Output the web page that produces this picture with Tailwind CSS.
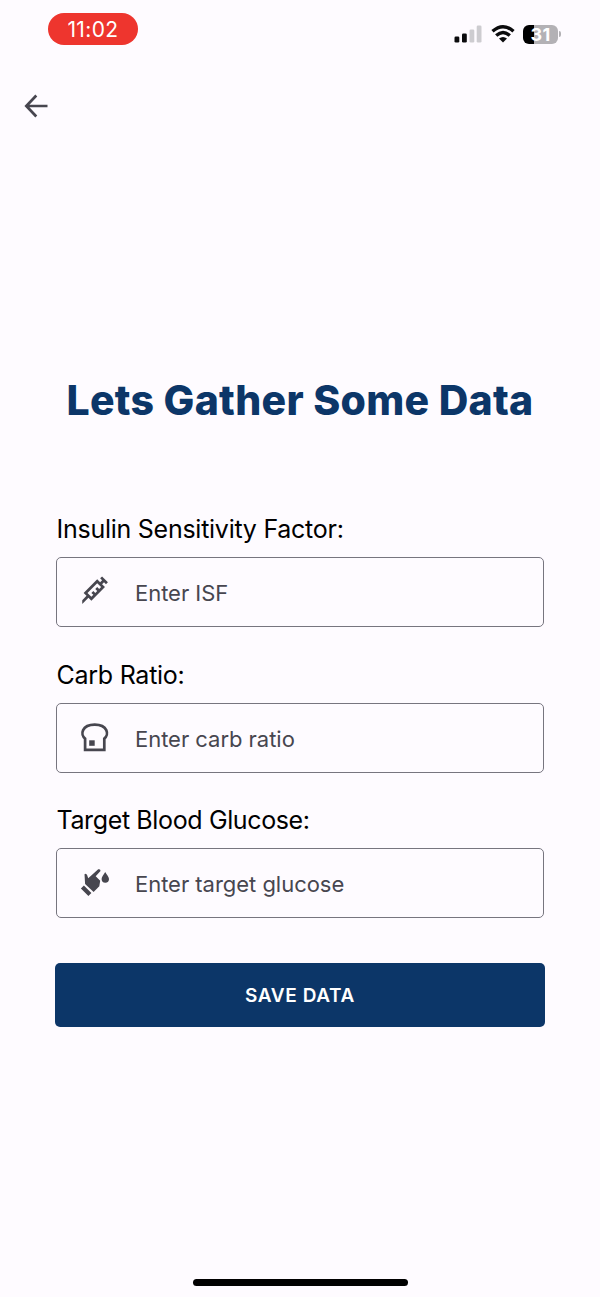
<!DOCTYPE html>
<html lang="en">
<head>
<meta charset="utf-8">
<title>Lets Gather Some Data</title>
<script src="https://cdn.jsdelivr.net/npm/@tailwindcss/browser@4"></script>
</head>
<body class="bg-[#fefbff]">
<div class="w-[600px] h-[1297px] flex flex-col overflow-hidden bg-[#fefbff] font-['Inter',sans-serif]">
  <header class="flex h-[60px] shrink-0 items-start justify-between pl-12 pr-[39px] pt-[13px]">
    <div class="flex h-8 w-[90px] items-center justify-center rounded-full bg-[#ee352e] pt-px text-[21px] tracking-[0.4px] text-white">11:02</div>
    <div class="flex h-5 items-center mt-[11px]">
      <svg class="h-5 w-[28px]" viewBox="0 0 28 20"><g fill="#0b0b0d"><rect x="0.5" y="12.5" width="4.8" height="6" rx="1.3"/><rect x="8" y="9.5" width="4.8" height="9" rx="1.3"/></g><g fill="#cdccd0"><rect x="15.5" y="5.5" width="4.8" height="13" rx="1.3"/><rect x="22.7" y="1.5" width="4.8" height="17" rx="1.3"/></g></svg>
      <svg class="ml-[9px] h-5 w-6" viewBox="0 0 24 20" fill="none" stroke="#0b0b0d" stroke-width="3.4"><path d="M1.5 7.3Q12-2 22.5 7.3M5.2 11.6Q12 5.5 18.8 11.6"/><path d="M8 14.5Q12 11.4 16 14.5L12 18.5Z" fill="#0b0b0d" stroke="none"/></svg>
      <div class="ml-[8px] flex h-[19px] w-[35px] items-center justify-center rounded-[6px] bg-gradient-to-r from-black from-31% to-[#b3b1b5] to-31% text-[18px] leading-[19px] font-bold tracking-[0.2px] text-white">31</div>
      <div class="ml-px h-[6px] w-[2px] rounded-r-full bg-[#b3b1b5]"></div>
    </div>
  </header>
  <nav class="flex h-[92px] shrink-0 items-center pl-[24px]">
    <svg class="h-6 w-6" viewBox="0 0 24 24" fill="none" stroke="#47464f" stroke-width="2.7"><path d="M12.3 1.5L2.3 12L12.3 22.5M2.5 12H23.5"/></svg>
  </nav>
  <main class="flex flex-col px-[55px] pt-[219px]">
    <h1 class="flex h-[60px] items-center justify-center whitespace-nowrap text-[41px] font-extrabold tracking-[0.28px] text-[#0c3668]">Lets Gather Some Data</h1>
    <form class="mt-[81px] flex flex-col px-[1px]">
      <label class="flex h-[36px] items-center whitespace-nowrap pl-[0.5px] text-[25px] tracking-[-0.26px] text-black">Insulin Sensitivity Factor:</label>
      <div class="mt-[9px] flex h-[70px] items-center rounded-[5px] border-[1.5px] border-[#77757f] pl-[21px]">
        <svg class="-mt-[3px] h-[33px] w-[33px]" viewBox="0 0 24 24" fill="#47464f"><path d="M11.15 15.18L9.73 13.77L11.15 12.35L12.56 13.77L13.97 12.35L12.56 10.94L13.97 9.53L15.39 10.94L16.8 9.53L13.97 6.7L6.9 13.77L9.73 16.6L11.15 15.18M3.08 19L6.2 15.89L4.08 13.77L13.97 3.87L16.1 6L17.5 4.58L16.1 3.16L17.5 1.75L21.75 6L20.34 7.4L18.92 6L17.5 7.4L19.63 9.53L9.73 19.42L7.61 17.3L3.08 21.84V19Z"/></svg>
        <span class="ml-[24px] mt-[3px] text-[22px] tracking-[-0.03px] text-[#47464f]">Enter ISF</span>
      </div>
      <label class="mt-[31px] flex h-[36px] items-center whitespace-nowrap pl-[0.5px] text-[25px] tracking-[-0.26px] text-black">Carb Ratio:</label>
      <div class="mt-[8.5px] flex h-[70px] items-center rounded-[5px] border-[1.5px] border-[#77757f] pl-[21px]">
        <svg class="-mt-px h-[33px] w-[33px]" viewBox="0 0 33 33" fill="none" stroke="#47464f" stroke-width="2.7"><path d="M7.1 28.9V17.6C2 13.8 3.7 3.6 16.7 3.6S31.4 13.8 26.3 17.6V28.9Z"/><path d="M11.2 19.3h5.5v5.5h-5.5Z" fill="#47464f" stroke="none"/></svg>
        <span class="ml-[24px] mt-[3px] text-[22px] tracking-[-0.03px] text-[#47464f]">Enter carb ratio</span>
      </div>
      <label class="mt-[30px] flex h-[36px] items-center whitespace-nowrap pl-[0.5px] text-[25px] tracking-[-0.37px] text-black">Target Blood Glucose:</label>
      <div class="mt-[9.5px] flex h-[70px] items-center rounded-[5px] border-[1.5px] border-[#77757f] pl-[21px]">
        <svg class="-mt-1 h-[33px] w-[33px]" viewBox="0 0 33 33" fill="#47464f"><path d="M2.9 23.5L5.9 20.5L13.4 28L10.4 31ZM6.5 9.3Q8.2 7.7 9.2 10.3L10.2 13.2L20.2 4.3Q22.6 3.6 22.5 6L17.7 11.2L22.2 15.7L21.3 21.2L15.6 27L7.1 18.9Z"/><path d="M27.2 7C28.8 9.6 31 12 31 14a3.7 3.7 0 0 1-7.4 0C23.6 12 25.6 9.6 27.2 7Z"/></svg>
        <span class="ml-[24px] mt-[3px] text-[22px] tracking-[-0.03px] text-[#47464f]">Enter target glucose</span>
      </div>
    </form>
    <button class="mt-[45px] flex h-[64px] items-center justify-center rounded-[5px] bg-[#0c3668] pt-[2px] text-[19px] font-semibold tracking-[0.6px] text-white">SAVE DATA</button>
  </main>
  <div class="mx-auto mt-auto mb-[11px] h-[7px] w-[215px] shrink-0 rounded-full bg-black"></div>
</div>
</body>
</html>
